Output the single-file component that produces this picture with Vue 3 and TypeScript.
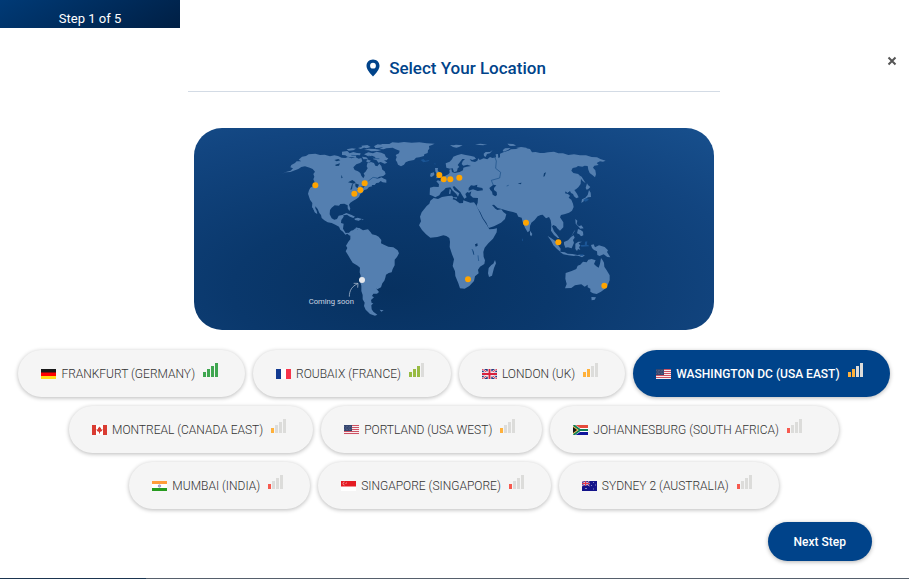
<script setup lang="ts">
import { ref } from 'vue'

interface Place {
  id: string
  name: string
  flag: string
  bars: number
  tone: string
  roomy?: boolean
}

const places: Place[] = [
  { id: 'fra', name: 'FRANKFURT (GERMANY)', flag: 'de', bars: 4, tone: 'green' },
  { id: 'rbx', name: 'ROUBAIX (FRANCE)', flag: 'fr', bars: 3, tone: 'lime' },
  { id: 'lon', name: 'LONDON (UK)', flag: 'gb', bars: 2, tone: 'amber' },
  { id: 'was', name: 'WASHINGTON DC (USA EAST)', flag: 'us', bars: 2, tone: 'amber' },
  { id: 'mtl', name: 'MONTREAL (CANADA EAST)', flag: 'ca', bars: 1, tone: 'amber' },
  { id: 'pdx', name: 'PORTLAND (USA WEST)', flag: 'us', bars: 1, tone: 'amber' },
  { id: 'jnb', name: 'JOHANNESBURG (SOUTH AFRICA)', flag: 'za', bars: 1, tone: 'red', roomy: true },
  { id: 'bom', name: 'MUMBAI (INDIA)', flag: 'in', bars: 1, tone: 'red' },
  { id: 'sin', name: 'SINGAPORE (SINGAPORE)', flag: 'sg', bars: 1, tone: 'red' },
  { id: 'syd', name: 'SYDNEY 2 (AUSTRALIA)', flag: 'au', bars: 1, tone: 'red' },
]

const selected = ref('was')

const pins: [number, number][] = [
  [364, 172], [481, 197], [499, 186], [512, 166],
  [736, 141], [749, 154], [769, 154], [796, 149],
  [996, 284], [1093, 343], [822, 454], [1231, 473],
]
</script>

<template>
  <main class="wizard">
    <div class="step">Step 1 of 5</div>
    <button class="close" type="button" aria-label="Close">
      <svg viewBox="0 0 10 10" width="10" height="10"><path d="M1.5 1.5 8.500 8.500M8.500 1.500 1.500 8.500" /></svg>
    </button>

    <header class="heading">
      <svg class="pin" viewBox="0 0 14 18" width="14" height="18">
        <path fill-rule="evenodd" d="M7 .5C3.200.5.500 3.300.500 6.800.500 10.500 4 14.500 7 17.500c3-3 6.500-7 6.500-10.700C13.500 3.300 10.800.5 7 .5Zm0 3.300a2.900 2.900 0 1 1 0 5.800 2.900 2.900 0 0 1 0-5.800Z" />
      </svg>
      <h1>Select Your Location</h1>
    </header>

    <div class="map">
      <svg viewBox="0 0 1560 606" role="img" aria-label="Data center locations">
        <g class="land">
          <g transform="translate(228 6)">
            <path d="M36 131 50 125 62 122 69 115 61 112 64 105 75 99 80 94 94 94 86 89 96 80 108 78 116 73 136 71 150 75 164 74 180 79 193 76 204 78 215 83 226 84 234 81 245 85 256 81 266 86 274 84 277 94 270 99 259 103 250 112 254 120 264 124 271 129 274 137 280 145 284 137 281 130 286 126 293 115 290 109 292 100 303 96 312 99 316 107 322 109 328 101 334 108 337 119 344 124 347 132 340 138 328 140 318 146 328 145 334 142 342 146 349 149 349 158 338 157 332 153 326 158 319 159 314 165 305 165 307 169 297 171 291 178 283 180 276 188 271 192 267 201 259 207 250 212 241 218 237 224 241 236 238 243 233 235 233 226 223 221 211 222 207 227 194 226 185 233 180 240 179 253 185 265 193 269 201 267 206 257 220 254 221 260 214 270 213 279 221 281 219 296 227 309 235 308 242 311 239 317 232 311 226 314 219 305 211 299 207 290 196 284 185 279 173 277 163 271 155 264 153 255 148 249 143 237 136 229 136 240 141 252 134 247 130 236 126 232 127 219 120 209 117 200 114 191 117 181 121 173 130 168 134 157 130 148 133 140 130 132 135 125 128 117 119 113 105 109 94 111 85 117 71 122 61 126 48 127Z" />
            <path d="M311 49 325 47 337 42 358 42 367 37 385 38 402 36 425 38 448 37 470 40 494 41 484 46 477 48 478 56 474 61 473 69 463 73 462 78 448 82 438 83 432 90 416 93 407 97 402 104 393 109 384 104 381 96 377 90 380 81 377 75 387 70 389 62 377 58 368 53 349 55 341 58 328 57 340 52 322 53Z" />
            <path d="M282 73 295 67 309 70 320 65 334 68 344 73 348 82 355 85 350 91 342 91 352 98 344 101 332 96 325 98 320 91 308 87 317 82 306 77 295 79Z" />
            <path d="M216 65 232 63 239 70 250 66 261 69 272 70 270 76 259 75 258 81 243 82 232 80 226 76 216 75Z M230 58 246 55 258 56 250 61 236 62Z M264 54 276 51 282 53 272 57Z M274 47 292 45 302 51 290 55 277 52Z M282 60 296 56 315 57 334 60 324 63 304 64 295 61Z M313 48 323 43 338 45 330 52 316 55Z M276 80 289 82 294 87 280 88Z M291 88 303 92 296 98 289 95Z" />
            <path d="M218 254 229 249 245 255 255 260 250 264 240 260 231 254 221 256Z M253 266 263 263 276 267 266 272 255 270Z M130 237 136 247 142 252 140 242 133 232Z" />
            <g class="water">
              <path d="M193 90 205 87 211 91 200 94Z M196 104 210 100 207 107 197 108Z M234 157 247 150 257 157 252 161Z M246 163 249 160 246 178 241 179Z M256 160 267 164 262 175 256 169Z M261 178 275 173 266 182Z M272 170 285 168 280 173Z M214 134 218 143 214 145Z" />
              <path class="rule" d="m295 153 14-11 13 2M296 77l19 9 13 0M244 76l18 1" />
            </g>
          </g>
          <g transform="translate(228 276)">
            <path d="M237 38 243 32 249 31 261 22 262 29 269 25 279 31 294 28 302 37 306 43 318 46 326 50 334 60 333 70 342 74 355 80 370 82 383 91 387 100 381 111 374 119 374 136 368 147 365 157 356 159 348 164 346 173 343 182 337 190 333 202 322 208 318 205 327 216 321 221 310 221 306 228 312 232 303 240 305 249 310 250 304 256 305 268 310 275 322 284 315 287 300 282 294 276 287 269 282 258 284 248 278 238 278 225 274 213 274 197 270 184 272 167 269 157 270 143 263 137 248 128 241 117 234 105 227 94 232 84 228 77 235 65 241 58 241 48Z M329 269 341 271 334 275Z M253 24 264 23 270 27 260 28Z M255 -3 270 -2 266 1Z M275 -2 281 -2 278 1Z" />
          </g>
          <g transform="translate(618 6)">
            <path fill-rule="evenodd" d="M90 173 101 170 116 171 117 163 109 154 114 151 120 153 128 145 135 138 145 133 149 128 148 119 154 117 156 126 164 129 179 126 189 121 190 113 200 110 213 108 202 104 190 107 185 102 188 94 195 87 187 87 180 96 173 105 178 111 173 115 171 124 162 127 158 115 150 116 139 113 137 100 149 95 156 88 160 80 171 76 184 72 197 75 210 77 223 80 228 86 217 90 209 87 214 94 225 96 232 92 235 85 239 90 251 85 262 88 270 81 277 84 288 82 287 73 294 72 295 84 300 82 300 71 312 66 325 62 333 58 349 57 366 53 378 55 390 57 396 67 407 66 420 69 432 69 444 67 462 65 475 70 489 70 505 75 522 73 540 76 558 76 575 81 591 82 601 87 617 92 609 95 600 94 590 99 596 105 583 107 579 113 586 121 588 133 585 142 577 135 569 129 565 119 563 108 554 107 547 110 534 108 529 112 518 114 514 122 520 129 535 132 543 145 542 162 535 172 528 178 523 180 531 191 536 202 529 205 522 199 519 192 513 189 510 183 502 189 497 184 495 190 504 192 510 197 506 203 514 209 519 221 521 231 516 242 507 248 493 253 483 255 480 262 490 277 490 292 480 302 472 295 468 289 460 285 456 289 462 304 471 314 478 324 473 324 462 315 453 302 454 284 452 271 447 261 438 265 428 254 422 255 413 259 404 270 394 278 390 288 389 302 383 307 375 293 368 276 365 263 355 260 350 250 339 246 325 243 305 237 293 234 282 224 276 225 286 236 292 240 304 238 310 246 319 253 315 267 303 278 282 289 266 294 259 278 249 264 241 247 229 229 233 218 234 204 219 203 211 196 214 184 207 188 202 186 196 192 200 202 193 206 186 195 181 186 172 178 163 169 158 170 163 180 178 190 174 200 169 192 157 181 151 172 137 174 132 180 123 187 118 196 106 202 97 197 89 194ZM206 174 213 166 222 167 232 164 231 171 247 174 249 181 233 183 219 178 206 182ZM268 174 280 164 289 166 282 174 282 180 290 186 291 195 286 199 278 194 276 185 271 180Z" />
            <path fill-rule="evenodd" d="M101 204 114 207 126 201 144 198 156 197 160 202 158 208 166 210 179 220 189 219 190 211 211 218 222 217 228 225 236 241 247 265 260 284 268 298 280 297 291 295 290 307 279 326 265 340 254 353 250 366 251 381 255 391 253 402 240 410 234 419 236 430 225 439 222 453 208 468 194 476 180 475 175 460 166 438 165 424 158 408 162 388 156 373 149 351 150 335 148 324 139 318 130 316 112 321 91 323 78 313 66 300 57 286 63 274 60 260 65 247 80 228 88 221 91 212ZM225 343 232 340 233 347 227 350ZM218 357 222 370 220 375Z" />
            <path d="M285 390 288 400 282 414 276 437 267 441 264 430 266 414 274 405 280 401Z M105 114 114 114 113 121 119 130 126 138 122 143 107 145 112 137 110 131 106 124Z M92 130 102 127 103 135 95 141 90 139Z M150 45 161 46 168 44 188 46 177 51 169 53 159 51Z M225 43 242 41 252 43 262 42 250 46 238 45Z M322 41 338 42 348 47 329 47Z M251 71 257 66 270 66 278 60 270 70 261 72 257 81 252 78Z M149 177 153 180 151 192 147 191Z M157 202 171 202 170 207Z" />
            <g class="water"><path d="M432 130 438 127 434 139 430 140Z M353 160 365 158 362 163Z" /><path class="rule" d="m283 78 6 15-2 22 15 12-3 17-25 7 6 15M320 168l6-2M216 357l6 17M234 376l2 17" /></g>
            <g class="islet"><path d="M62 90 70 87 76 92 89 89 85 94 70 97Z M103 99 107 101 105 105Z M367 326 369 326 369 333 367 333Z" /></g>
          </g>
          <g transform="translate(918 6)">
            <path d="M235 134 245 140 251 150 257 160 248 153 241 144Z M261 160 264 165 271 171 265 177 260 179 257 174Z M267 180 272 188 273 201 264 202 256 207 251 214 244 219 246 208 256 203 263 195Z" />
            <path d="M226 267 232 272 230 282 237 289 244 286 251 295 241 296 234 288 227 281Z M234 297 242 300 249 305 250 316 243 319 238 313 231 310Z M222 304 226 300 217 315 213 321Z" />
            <path d="M192 336 204 331 213 321 221 316 224 323 219 330 222 338 215 355 204 352 196 353 192 343Z M143 318 154 325 167 334 174 345 182 356 181 365 171 357 160 346 154 334Z M179 365 194 367 203 371 217 372 232 375 222 378 205 376 190 373Z M227 376 238 374 255 376 246 382 237 378Z M226 341 235 335 246 335 236 340 241 347 237 351 241 360 234 357 231 363 226 357Z M273 345 281 343 285 352 297 346 314 351 324 361 321 366 331 382 322 381 311 373 299 378 292 375 291 364 282 360 276 354Z M90 302 97 312 94 319 90 315Z" />
            <path d="M197 429 215 423 229 417 233 407 241 404 249 395 260 397 265 389 275 387 287 391 282 402 289 409 296 413 300 401 303 384 308 391 312 398 313 410 320 421 329 436 329 451 323 465 314 477 303 485 290 492 279 490 271 485 271 476 263 472 263 464 254 470 244 463 225 466 214 474 195 475 200 462 196 446Z M274 501 288 502 284 509 275 511Z" />
            <path d="M24 43 37 42 48 46 33 48Z M8 61 15 55 32 54 24 60 11 65Z M48 54 63 51 79 53 81 57 63 59Z" />
            <g class="islet"><path d="M249 210 260 204 267 209 257 215Z M255 335 262 334 260 348 254 347Z M242 345 265 345 267 349 244 350Z M239 374 251 373 249 377 240 377Z" /></g>
          </g>
        </g>
        <circle v-for="(p, i) in pins" :key="i" class="dot" :cx="p[0]" :cy="p[1]" r="9" />
        <circle class="soon-dot" cx="504" cy="456" r="9" />
        <path class="arrow" d="M466 506C466 487 474 475 491 467M479 466 492 466 491 479" />
        <text x="344" y="527">Coming soon</text>
      </svg>
    </div>

    <div class="places" role="group" aria-label="Location">
      <button
        v-for="p in places"
        :key="p.id"
        type="button"
        class="place"
        :class="{ active: selected === p.id, roomy: p.roomy }"
        :aria-pressed="selected === p.id"
        @click="selected = p.id"
      >
        <svg class="flag" viewBox="0 0 30 20" width="15" height="10" aria-hidden="true">
          <template v-if="p.flag === 'de'">
            <path fill="#181818" d="M0 0h30v8H0z" /><path fill="#f00" d="M0 7h30v7H0z" /><path fill="#ffda16" d="M0 14h30v6H0z" />
          </template>
          <template v-else-if="p.flag === 'fr'">
            <path fill="#fff" d="M0 0h30v20H0z" /><path fill="#123a91" d="M0 0h10v20H0z" /><path fill="#f7344b" d="M20 0h10v20H20z" />
          </template>
          <template v-else-if="p.flag === 'gb'">
            <path fill="#263b7e" d="M0 0h30v20H0z" />
            <path stroke="#fff" stroke-width="4" d="m0 0 30 20M30 0 0 20" /><path stroke="#d9324a" stroke-width="2" d="m0 0 30 20M30 0 0 20" />
            <path stroke="#fff" stroke-width="7" d="M15 0v20M0 10h30" /><path stroke="#d9203c" stroke-width="4" d="M15 0v20M0 10h30" />
          </template>
          <template v-else-if="p.flag === 'us'">
            <path fill="#f7eef0" d="M0 0h30v20H0z" /><path stroke="#cd5263" stroke-width="2" d="M0 1h30M0 5h30M0 9h30M0 13h30M0 17h30" />
            <path fill="#35466f" d="M0 0h16v12H0z" /><path stroke="#909bb5" stroke-dasharray="1 2" d="M1 3h14M2 6h13M1 9h14" />
          </template>
          <template v-else-if="p.flag === 'ca'">
            <path fill="#fff" d="M0 0h30v20H0z" /><path fill="#d93c32" d="M0 0h8v20H0zM22 0h8v20h-8zM15 3l2 3 1-1v4l3-1-1 4-4 2v3h-2v-3l-4-2-1-4 3 1V5l1 1z" />
          </template>
          <template v-else-if="p.flag === 'za'">
            <path fill="#fff" d="M0 0h30v20H0z" /><path fill="#e64b3c" d="M5 0h25v6H14z" /><path fill="#10159c" d="M5 20h25v-6H14z" />
            <path fill="none" stroke="#128057" stroke-width="4" d="m1 0 13 10L1 20M14 10h16" /><path fill="#efb73e" d="m0 2 11 8-11 8z" /><path fill="#141414" d="m0 4 8 6-8 6z" />
          </template>
          <template v-else-if="p.flag === 'in'">
            <path fill="#fff" d="M0 0h30v20H0z" /><path fill="#ff9d3b" d="M0 0h30v6H0z" /><path fill="#279b20" d="M0 14h30v6H0z" /><circle cx="15" cy="10" r="2.500" fill="#b4b4df" stroke="#6c6cae" />
          </template>
          <template v-else-if="p.flag === 'sg'">
            <path fill="#fff" d="M0 0h30v20H0z" /><path fill="#e51b23" d="M0 0h30v11H0z" /><path fill="none" stroke="#fff" d="M7 2a3 3 0 1 0 0 6" /><path fill="#fff" d="M8 4h1v1H8zM10 2h1v1h-1zM11 5h1v1h-1z" />
          </template>
          <template v-else>
            <path fill="#13138a" d="M0 0h30v20H0z" /><path stroke="#e9a9bd" stroke-width="2" d="m0 0 15 10M15 0 0 10" /><path stroke="#fff" stroke-width="3" d="M7 0v10M0 5h15" /><path stroke="#e53848" stroke-width="2" d="M7 0v10M0 5h15" />
            <path fill="#fff" d="M7 14h2v2H7zM22 2h1v2h-1zM18 8h1v2h-1zM26 7h1v2h-1zM22 15h1v2h-1z" />
          </template>
        </svg>
        <span>{{ p.name }}</span>
        <svg class="signal" :class="p.tone" viewBox="0 0 15 14" width="15" height="14" aria-hidden="true">
          <rect v-for="n in 4" :key="n" :class="{ on: n <= p.bars }" :x="(n - 1) * 4" :y="[9, 6, 3, 0][n - 1]" width="3" :height="[5, 8, 11, 14][n - 1]" />
        </svg>
      </button>
    </div>

    <footer>
      <button class="next" type="button">Next Step</button>
    </footer>
  </main>
</template>

<style>
body {
  background: #fff;
}
</style>

<style scoped>
.wizard {
  position: relative;
  display: flex;
  flex-direction: column;
  align-items: center;
  box-sizing: border-box;
  min-height: 100vh;
  padding-right: 1px;
  font-family: Roboto, "Liberation Sans", sans-serif;
  background: linear-gradient(90deg, #1b3550 146px, #56606c 146px) bottom / 100% 1px no-repeat #fff;
}
button {
  border: 0;
  font: inherit;
  cursor: pointer;
}
.step {
  align-self: flex-start;
  box-sizing: border-box;
  width: 180px;
  height: 28px;
  padding-top: 9px;
  color: #fff;
  background: linear-gradient(150deg, #003a76, #001f44);
  font-size: 13px;
  line-height: 19px;
  text-align: center;
}
.close {
  position: absolute;
  top: 56px;
  right: 12px;
  display: flex;
  padding: 0;
  background: none;
}
.close path {
  fill: none;
  stroke: #555;
  stroke-width: 2;
}
.heading {
  display: flex;
  align-items: center;
  justify-content: center;
  gap: 9px;
  box-sizing: border-box;
  width: calc(100% - 32px);
  max-width: 532px;
  margin-top: 16px;
  padding: 12px 0 11px 4px;
  border-bottom: 1px solid #d3dbe5;
}
h1 {
  margin: 0;
  color: #00438a;
  font-size: 17px;
  font-weight: 500;
  line-height: 24px;
}
.pin {
  fill: #00438a;
}
.map {
  width: calc(100% - 32px);
  max-width: 520px;
  margin-top: 36px;
  overflow: hidden;
  border-radius: 28px;
  background: radial-gradient(110% 130% at 38% 80%, #073160 0%, #0a386c 28%, #124580 62%, #1c5898 100%);
}
.map > svg {
  display: block;
  width: 100%;
}
.land {
  fill: #547fb0;
}
.water {
  fill: #0d3e72;
}
.rule {
  fill: none;
  stroke: #174d86;
  stroke-width: 2;
}
.islet {
  fill: #1b5595;
}
.dot {
  fill: #ffa400;
}
.soon-dot {
  fill: #e6e8ec;
}
.arrow {
  fill: none;
  stroke: #c4d0df;
  stroke-width: 2;
}
.map text {
  fill: #cbd5e2;
  font-size: 23px;
}
.places {
  display: flex;
  flex-wrap: wrap;
  justify-content: center;
  gap: 9px 8px;
  box-sizing: border-box;
  width: 100%;
  margin-top: 20px;
  padding: 0 12px;
}
.place {
  display: flex;
  align-items: center;
  height: 47px;
  padding: 0 27px 0 23px;
  border-radius: 24px;
  color: #333;
  background: #f5f5f5;
  box-shadow: 0 1px 4px rgba(0, 0, 0, 0.28);
  font-size: 12px;
  font-weight: 300;
  line-height: 16px;
  white-space: nowrap;
}
.place.roomy {
  padding-right: 37px;
}
.place.active {
  color: #fff;
  background: #00438a;
  font-weight: 500;
}
.flag {
  margin-right: 5px;
}
.signal {
  margin: 0 0 7px 8px;
}
.signal rect {
  fill: #dcdcda;
}
.green .on {
  fill: #3fa650;
}
.lime .on {
  fill: #98bb43;
}
.amber .on {
  fill: #ffb13b;
}
.red .on {
  fill: #f75a4f;
}
footer {
  display: flex;
  justify-content: flex-end;
  box-sizing: border-box;
  width: 100%;
  padding: 13px 36px 16px;
}
.next {
  height: 39px;
  padding: 0 26px;
  border-radius: 20px;
  color: #fff;
  background: #00438a;
  box-shadow: 0 1px 4px rgba(0, 0, 0, 0.3);
  font-size: 12px;
  font-weight: 500;
}
</style>
